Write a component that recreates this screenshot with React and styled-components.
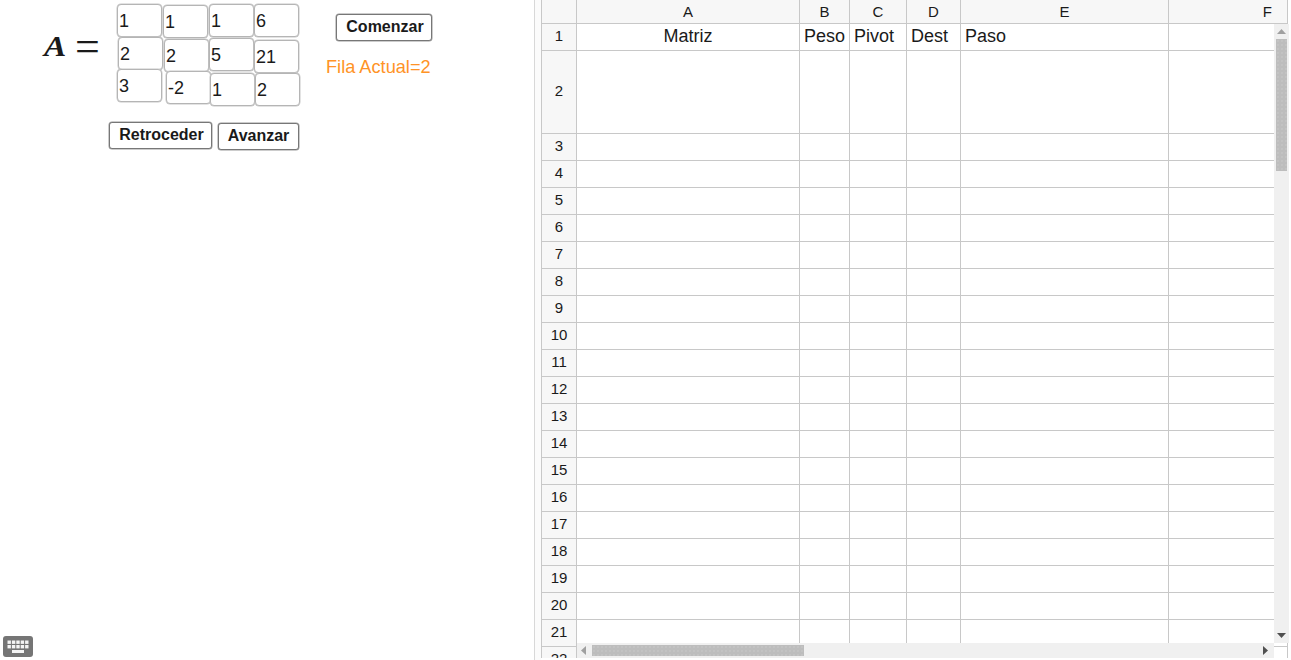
import React from "react";
import styled, { createGlobalStyle } from "styled-components";

const GlobalStyle = createGlobalStyle`
  html, body {
    margin: 0;
    height: 100%;
    background: #fff;
    overflow: hidden;
  }
  body {
    font-family: "Liberation Sans", Arial, sans-serif;
  }
`;

const Page = styled.div`
  display: flex;
  width: 1291px;
  height: 660px;
  overflow: hidden;
`;

const Graphics = styled.div`
  position: relative;
  flex: 0 0 534px;
  height: 660px;
  box-sizing: border-box;
  padding-top: 4px;
`;

const TopRow = styled.div`
  display: flex;
  align-items: flex-start;
  padding-left: 44px;
`;

const MathLabel = styled.div`
  flex: 0 0 73px;
  height: 56px;
  display: flex;
  align-items: baseline;
  font-family: "Liberation Serif", "DejaVu Serif", serif;
  line-height: 56px;
  margin-top: 14px;
  color: #1a1a1a;
`;

const MathVar = styled.span`
  display: inline-block;
  width: 31px;
  font-size: 29px;
  font-style: italic;
  font-weight: 700;
  transform: scaleX(1.15);
  transform-origin: left center;
`;

const MathEq = styled.span`
  font-size: 44px;
  line-height: 40px;
  font-weight: 400;
  transform: translateY(5px);
`;

const Matrix = styled.div`
  display: grid;
  grid-template-columns: repeat(4, 45px);
  grid-auto-rows: 33px;
  gap: 1px;
  flex: 0 0 auto;
`;

const Cell = styled.div`
  box-sizing: border-box;
  transform: translate(${(p) => p.$dx}px, ${(p) => p.$dy}px);
  border: 1px solid #b5b5b5;
  border-radius: 4px;
  box-shadow: 0 0 0 0.5px #c8c8c8;
  background: #fff;
  padding: 6px 0 0 1px;
  font-size: 18px;
  line-height: 20px;
  color: #1a1a1a;
`;

const SideColumn = styled.div`
  display: flex;
  flex-direction: column;
  align-items: flex-start;
  gap: 16px;
  margin-left: 36px;
  padding-top: 10px;
`;

const ActionButton = styled.button`
  width: ${(p) => p.$w}px;
  height: 27px;
  box-sizing: border-box;
  padding: 0 0 2px ${(p) => (p.$nudge ? "2px" : "0")};
  background: #fff;
  border: 1px solid #777;
  border-radius: 3px;
  box-shadow: 0 0 0 0.5px #999;
  font-family: "Liberation Sans", Arial, sans-serif;
  font-size: 16px;
  font-weight: 700;
  color: #1a1a1a;
`;

const RowText = styled.div`
  margin-left: -10px;
  font-size: 18.2px;
  line-height: 20px;
  white-space: nowrap;
  color: #ff9326;
`;

const ButtonRow = styled.div`
  display: flex;
  align-items: flex-start;
  gap: 6px;
  padding-left: 109px;
  margin-top: 17px;
`;

const LowerButton = styled(ActionButton)`
  margin-top: 1px;
`;

const KeyboardButton = styled.div`
  position: absolute;
  left: 3px;
  bottom: 3px;
  line-height: 0;
`;

const Divider = styled.div`
  flex: 0 0 7px;
  height: 660px;
  background: #fbfbfb;
  border-left: 1px solid #d8d8d8;
  box-sizing: border-box;
`;

const SheetArea = styled.div`
  position: relative;
  flex: 0 0 748px;
  height: 658px;
  overflow: hidden;
`;

const Grid = styled.div`
  display: grid;
  grid-template-columns: 36px 223px 50px 57px 54px 208px 119px;
  grid-template-rows: 24px 27px 83px;
  grid-auto-rows: 27px;
  width: 747px;
`;

const Corner = styled.div`
  box-sizing: border-box;
  background: #f7f7f7;
  border-right: 1px solid #c8c8c8;
  border-bottom: 1px solid #c8c8c8;
  border-left: ${(p) => (p.$first ? "1px solid #c8c8c8" : "0")};
`;

const ColHeader = styled(Corner)`
  display: flex;
  align-items: center;
  justify-content: ${(p) => (p.$end ? "flex-end" : "center")};
  padding-right: ${(p) => (p.$end ? "15px" : "0")};
  font-size: 15px;
  color: #1a1a1a;
`;

const RowHeader = styled.div`
  box-sizing: border-box;
  grid-column: 1;
  display: flex;
  align-items: center;
  justify-content: center;
  padding-bottom: 3px;
  background: #f7f7f7;
  border-left: 1px solid #c8c8c8;
  border-right: 1px solid #c8c8c8;
  border-bottom: 1px solid #c8c8c8;
  font-size: 15px;
  color: #1a1a1a;
`;

const DataCell = styled.div`
  box-sizing: border-box;
  display: flex;
  align-items: center;
  justify-content: ${(p) => (p.$center ? "center" : "flex-start")};
  padding: 0 0 1px ${(p) => (p.$center ? "0" : "4px")};
  background: #fff;
  border-right: 1px solid #c8c8c8;
  border-bottom: 1px solid #c8c8c8;
  font-size: 18px;
  color: #1a1a1a;
  white-space: nowrap;
`;

const VScroll = styled.div`
  position: absolute;
  right: 0;
  top: 24px;
  width: 15px;
  height: 619px;
  box-sizing: border-box;
  padding: 5px 2px;
  display: flex;
  flex-direction: column;
  align-items: center;
  background: #f0f0f0;
`;

const HScroll = styled.div`
  position: absolute;
  left: 36px;
  bottom: 0;
  width: 697px;
  height: 15px;
  box-sizing: border-box;
  padding: 2px 6px 2px 4px;
  display: flex;
  align-items: center;
  background: #f0f0f0;
`;

const Thumb = styled.div`
  flex: 0 0 auto;
  width: ${(p) => p.$w};
  height: ${(p) => p.$h};
  margin: ${(p) => p.$m};
  background-color: #bdbdbd;
  background-image: radial-gradient(#c8c8c8 0.6px, transparent 0.8px);
  background-size: 4px 4px;
`;

const Spring = styled.div`
  flex: 1;
`;

const matrix = [
  { value: "1", dx: 0, dy: 0 },
  { value: "1", dx: 0, dy: 1 },
  { value: "1", dx: 0, dy: 0 },
  { value: "6", dx: -1, dy: 0 },
  { value: "2", dx: 1, dy: -1 },
  { value: "2", dx: 1, dy: 1 },
  { value: "5", dx: 0, dy: 0 },
  { value: "21", dx: -1, dy: 2 },
  { value: "3", dx: 0, dy: -3 },
  { value: "-2", dx: 3, dy: -1 },
  { value: "1", dx: 1, dy: 1 },
  { value: "2", dx: 0, dy: 1 },
];

const columns = ["A", "B", "C", "D", "E", "F"];

const rows = Array.from({ length: 22 }, (_, i) => i + 1);

const firstRow = [
  { text: "Matriz", center: true },
  { text: "Peso" },
  { text: "Pivot" },
  { text: "Dest" },
  { text: "Paso" },
  { text: "" },
];

const KeyboardIcon = () => (
  <svg width="30" height="21" viewBox="0 0 30 21">
    <rect width="30" height="21" rx="3" fill="#757575" />
    {[0, 1, 2, 3, 4].map((i) => (
      <g key={i} fill="#f4f4f4">
        <rect x={4.5 + i * 4.4} y="4.5" width="3.4" height="3.4" />
        <rect x={4.5 + i * 4.4} y="9" width="3.4" height="3.4" />
      </g>
    ))}
    <rect x="9" y="14" width="12" height="3" fill="#f4f4f4" />
  </svg>
);

const App = () => {
  return (
    <Page>
      <GlobalStyle />
      <Graphics>
        <TopRow>
          <MathLabel>
            <MathVar>A</MathVar>
            <MathEq>=</MathEq>
          </MathLabel>
          <Matrix>
            {matrix.map((c, i) => (
              <Cell key={i} $dx={c.dx} $dy={c.dy}>{c.value}</Cell>
            ))}
          </Matrix>
          <SideColumn>
            <ActionButton $w={96} $nudge>Comenzar</ActionButton>
            <RowText>Fila Actual=2</RowText>
          </SideColumn>
        </TopRow>
        <ButtonRow>
          <ActionButton $w={103} $nudge>Retroceder</ActionButton>
          <LowerButton $w={81}>Avanzar</LowerButton>
        </ButtonRow>
        <KeyboardButton>
          <KeyboardIcon />
        </KeyboardButton>
      </Graphics>
      <Divider />
      <SheetArea>
        <Grid>
          <Corner $first />
          {columns.map((c) => (
            <ColHeader key={c} $end={c === "F"}>{c}</ColHeader>
          ))}
          {rows.map((r) => (
            <React.Fragment key={r}>
              <RowHeader>{r}</RowHeader>
              {columns.map((c, i) => (
                <DataCell key={c} $center={r === 1 && firstRow[i].center}>
                  {r === 1 ? firstRow[i].text : ""}
                </DataCell>
              ))}
            </React.Fragment>
          ))}
        </Grid>
        <VScroll>
          <svg width="9" height="5" viewBox="0 0 9 5">
            <path d="M4.5 0 9 5H0z" fill="#a0a0a0" />
          </svg>
          <Thumb $w="11px" $h="132px" $m="5px 0 0" />
          <Spring />
          <svg width="9" height="5" viewBox="0 0 9 5">
            <path d="M0 0h9L4.5 5z" fill="#505050" />
          </svg>
        </VScroll>
        <HScroll>
          <svg width="5" height="9" viewBox="0 0 5 9">
            <path d="M5 0v9L0 4.5z" fill="#a0a0a0" />
          </svg>
          <Thumb $w="212px" $h="11px" $m="0 0 0 6px" />
          <Spring />
          <svg width="5" height="9" viewBox="0 0 5 9">
            <path d="M0 0v9l5-4.5z" fill="#505050" />
          </svg>
        </HScroll>
      </SheetArea>
    </Page>
  );
};

export default App;
